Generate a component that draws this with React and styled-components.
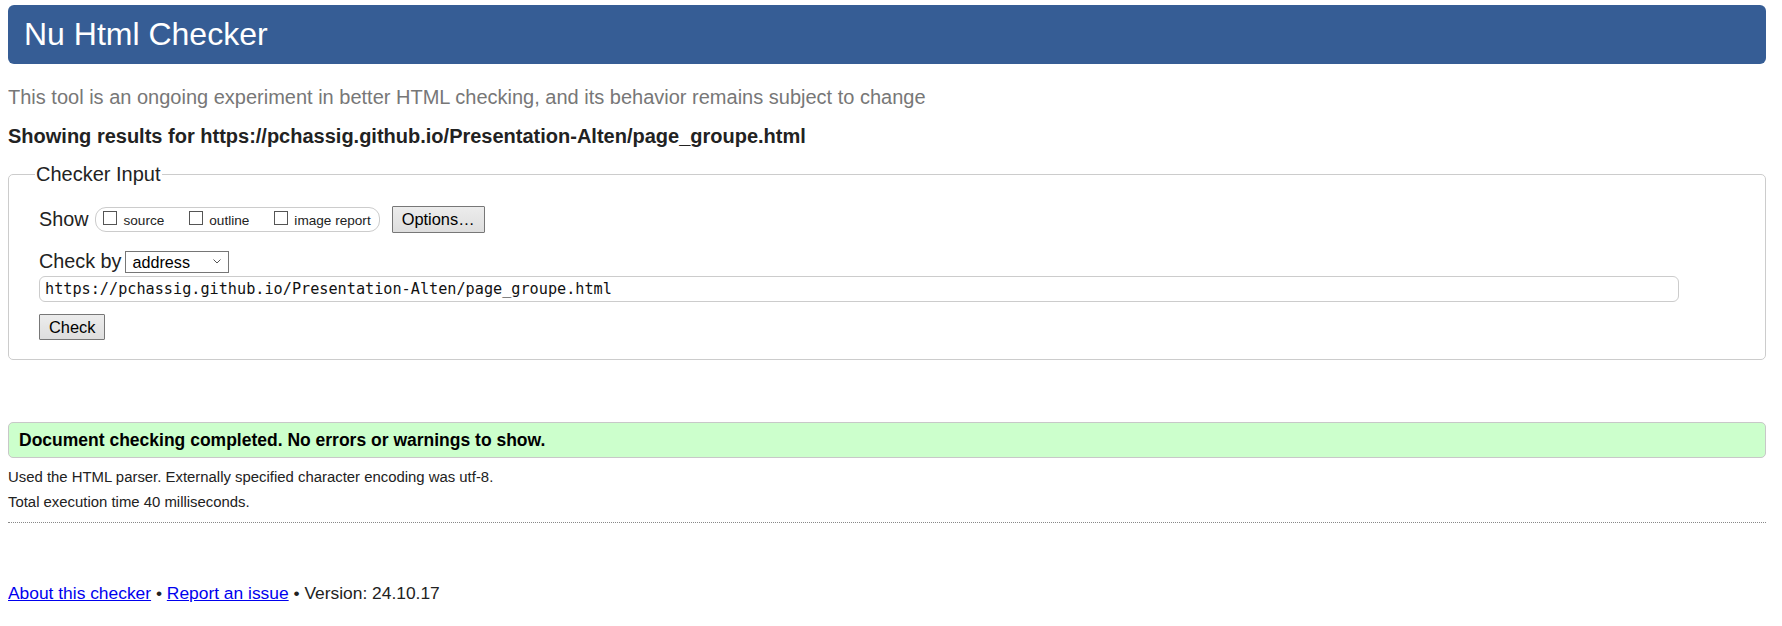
import React from 'react';
import styled, { createGlobalStyle } from 'styled-components';

const GlobalStyle = createGlobalStyle`
  body {
    margin: 5px 16px 0 8px;
    font-family: "Liberation Sans", Arial, sans-serif;
    color: #222;
    background: #fff;
  }
`;

const Header = styled.h1`
  margin: 0;
  padding: 11px 16px;
  background-color: #365d95;
  color: #fff;
  font-size: 32px;
  font-weight: normal;
  line-height: 37px;
  border-radius: 6px;
`;

const Tagline = styled.p`
  margin: 22px 0 0;
  font-size: 20px;
  line-height: 23px;
  color: #777;
`;

const ResultsFor = styled.p`
  margin: 16px 0 0;
  font-size: 20px;
  line-height: 23px;
  font-weight: bold;
`;

const Fieldset = styled.fieldset`
  margin: 15px 0 0;
  padding: 21px 30px 19px;
  border: 1px solid #ccc;
  border-radius: 5px;
  min-width: 0;
`;

const Legend = styled.legend`
  margin-left: -4px;
  padding: 0 1px;
  font-size: 20px;
  line-height: 22px;
  color: #222;
`;

const Row = styled.div`
  display: flex;
  align-items: ${(p) => p.$align || 'center'};
  margin-top: ${(p) => p.$top || 0}px;
`;

const Label = styled.span`
  font-size: 19.8px;
  line-height: 19px;
  margin-right: ${(p) => p.$gap || 4}px;
`;

const CheckGroup = styled.div`
  display: inline-flex;
  align-items: center;
  gap: 25px;
  height: 25px;
  box-sizing: border-box;
  padding: 0 8px 0 7px;
  border: 1px solid #ccc;
  border-radius: 11px;
`;

const Option = styled.label`
  display: inline-flex;
  align-items: baseline;
  font-size: 13.6px;
  line-height: 15px;
  color: #222;
`;

const Box = styled.span`
  display: inline-block;
  width: 12px;
  height: 12px;
  border: 1px solid #555;
  background: #fff;
  margin: 0 6px 1px 0;
`;

const Button = styled.button`
  height: ${(p) => p.$h || 26}px;
  padding: 0 9px;
  margin-left: ${(p) => p.$left || 0}px;
  font-family: "Liberation Sans", Arial, sans-serif;
  font-size: 16.4px;
  color: #000;
  background: linear-gradient(#ececec, #dedede);
  border: 1px solid #777;
  border-radius: 1px;
  box-sizing: border-box;
`;

const SelectWrap = styled.span`
  position: relative;
  display: inline-block;
`;

const Select = styled.select`
  appearance: none;
  width: 104px;
  height: 22px;
  box-sizing: border-box;
  padding: 0 0 0 6px;
  border: 1px solid #767676;
  border-radius: 0;
  background: #fff;
  font-family: "Liberation Sans", Arial, sans-serif;
  font-size: 16.2px;
  color: #000;
`;

const Chevron = styled.svg`
  position: absolute;
  right: 8px;
  top: 8px;
  pointer-events: none;
`;

const UrlInput = styled.input`
  display: block;
  width: 1640px;
  height: 26px;
  box-sizing: border-box;
  margin-top: 3px;
  padding: 0 5px;
  border: 1px solid #ccc;
  border-radius: 6px;
  font-family: "DejaVu Sans Mono", "Liberation Mono", monospace;
  font-size: 15.2px;
  color: #111;
`;

const CheckRow = styled.div`
  margin-top: 12px;
`;

const Success = styled.p`
  margin: 62px 0 0;
  padding: 0 10px;
  background: #ccffcc;
  border: 1px solid #c8c8c8;
  border-radius: 5px;
  font-size: 17.5px;
  font-weight: bold;
  line-height: 34px;
  color: #000;
`;

const Detail = styled.p`
  margin: ${(p) => p.$top || 0}px 0 0;
  font-size: 14.9px;
  line-height: 25px;
  color: #222;
`;

const Divider = styled.hr`
  margin: 7px 0 0;
  border: 0;
  border-top: 1px dotted #888;
  height: 0;
`;

const Footer = styled.p`
  margin: 60px 0 0;
  font-size: 17.4px;
  line-height: 20px;
  color: #222;
`;

const Link = styled.a`
  color: #0000ee;
  text-decoration: underline;
`;

const App = () => {
  const url = 'https://pchassig.github.io/Presentation-Alten/page_groupe.html';

  return (
    <>
      <GlobalStyle />
      <Header>Nu Html Checker</Header>
      <Tagline>
        This tool is an ongoing experiment in better HTML checking, and its behavior remains subject to change
      </Tagline>
      <ResultsFor>Showing results for {url}</ResultsFor>

      <Fieldset>
        <Legend>Checker Input</Legend>
        <Row>
          <Label $gap={7}>Show</Label>
          <CheckGroup>
            <Option><Box />source</Option>
            <Option><Box />outline</Option>
            <Option><Box />image report</Option>
          </CheckGroup>
          <Button $h={27} $left={12}>Options…</Button>
        </Row>
        <Row $align="baseline" $top={18}>
          <Label $gap={4}>Check by</Label>
          <SelectWrap>
            <Select defaultValue="address">
              <option value="address">address</option>
              <option value="file">file upload</option>
              <option value="text">text input</option>
            </Select>
            <Chevron width="8" height="5" viewBox="0 0 8 5">
              <path d="M0.5 0.5 L4 4 L7.5 0.5" fill="none" stroke="#555" strokeWidth="1" />
            </Chevron>
          </SelectWrap>
        </Row>
        <UrlInput defaultValue={url} />
        <CheckRow>
          <Button>Check</Button>
        </CheckRow>
      </Fieldset>

      <Success>Document checking completed. No errors or warnings to show.</Success>
      <Detail $top={7}>Used the HTML parser. Externally specified character encoding was utf-8.</Detail>
      <Detail>Total execution time 40 milliseconds.</Detail>
      <Divider />
      <Footer>
        <Link href="#about">About this checker</Link> • <Link href="#issue">Report an issue</Link> • Version: 24.10.17
      </Footer>
    </>
  );
};

export default App;
